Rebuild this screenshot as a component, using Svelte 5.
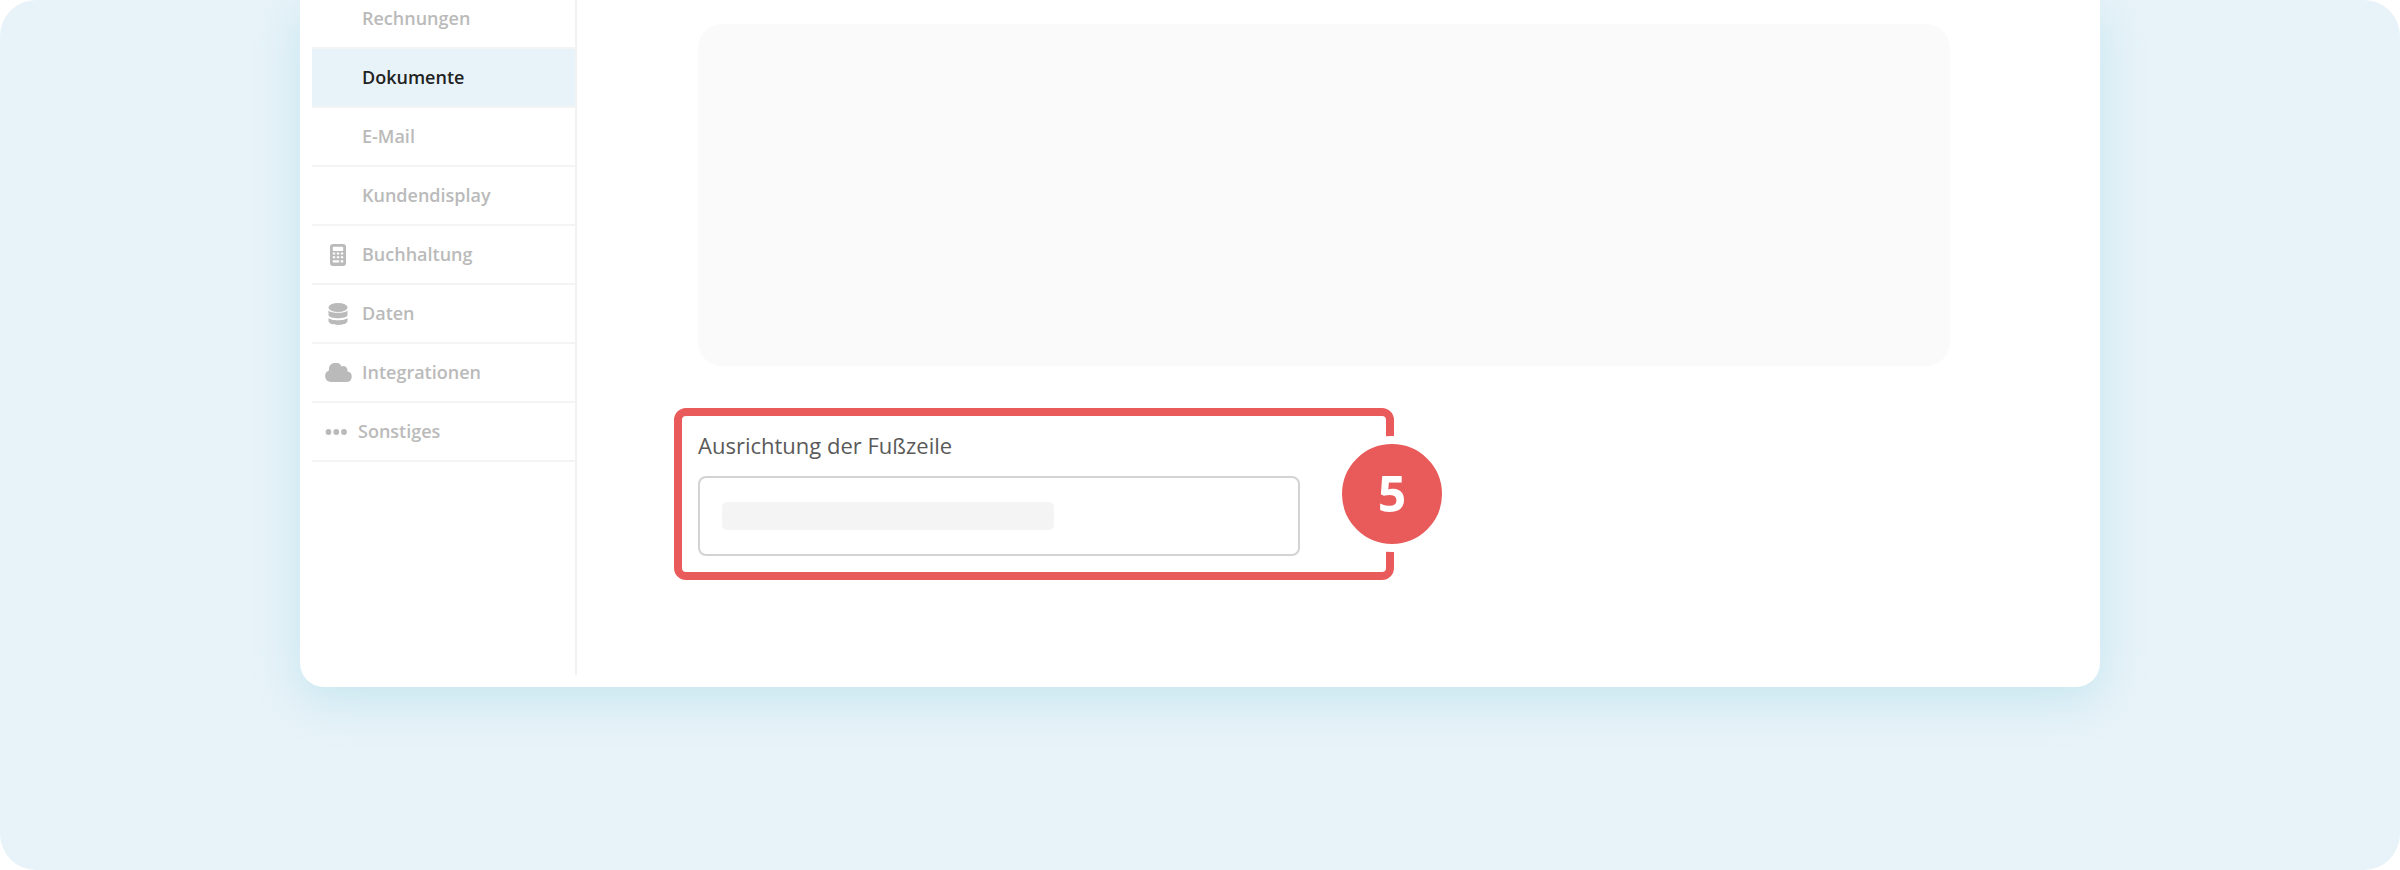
<script>
	let open = $state(false);

	const items = [
		{ label: 'Rechnungen' },
		{ label: 'Dokumente', active: true },
		{ label: 'E-Mail' },
		{ label: 'Kundendisplay' },
		{ label: 'Buchhaltung', icon: 'calculator' },
		{ label: 'Daten', icon: 'database' },
		{ label: 'Integrationen', icon: 'cloud' },
		{ label: 'Sonstiges', icon: 'dots' }
	];
</script>

<div class="page">
	<div class="card">
		<nav class="sidebar">
			<ul>
				{#each items as item}
					<li>
						<a href="#{item.label}" class:active={item.active} class:compact={item.icon === 'dots'}>
							<span class="icon">
								{#if item.icon === 'calculator'}
									<svg width="16" height="22" viewBox="0 0 16 22">
										<path
											fill-rule="evenodd"
											d="M3 0h10a3 3 0 0 1 3 3v16a3 3 0 0 1-3 3H3a3 3 0 0 1-3-3V3a3 3 0 0 1 3-3ZM3.500 2.700a.7.7 0 0 0-.7.7v2.900a.7.7 0 0 0 .7.7h9a.7.7 0 0 0 .7-.7V3.400a.7.7 0 0 0-.7-.7ZM2.800 8.500v2h2.400v-2ZM6.800 8.500v2h2.400v-2ZM10.800 8.500v2h2.400v-2ZM2.800 12.200v2h2.400v-2ZM6.800 12.200v2h2.400v-2ZM10.800 12.200v2h2.400v-2ZM2.800 16.200v2.200h6.400v-2.200ZM10.800 16.200v2.200h2.400v-2.200Z"
										/>
									</svg>
								{:else if item.icon === 'database'}
									<svg width="20" height="22" viewBox="0 0 20 22">
										<ellipse cx="10" cy="4.500" rx="9.500" ry="4.500" />
										<path d="M.5 7.500C3 10.600 17 10.600 19.500 7.500V12C19 16.400 1 16.400.5 12Z" />
										<path d="M.5 15C3 18 17 18 19.500 15v3C19 23.200 1 23.200.5 18Z" />
									</svg>
								{:else if item.icon === 'cloud'}
									<svg width="27" height="19" viewBox="0 0 27 19">
										<path
											d="M6 19a6 6 0 0 1-2-11.600A6.700 6.700 0 0 1 16.600 3.400 4.100 4.100 0 0 1 22.300 8.200 5.450 5.450 0 0 1 21.500 19Z"
										/>
									</svg>
								{:else if item.icon === 'dots'}
									<svg width="24" height="6" viewBox="0 0 24 6">
										<circle cx="4.500" cy="3" r="2.900" />
										<circle cx="12.300" cy="3" r="2.900" />
										<circle cx="20" cy="3" r="2.900" />
									</svg>
								{/if}
							</span>
							<span class="text">{item.label}</span>
						</a>
					</li>
				{/each}
			</ul>
		</nav>

		<main>
			<div class="preview"></div>

			<div class="highlight">
				<label for="footer-align">Ausrichtung der Fußzeile</label>
				<button
					id="footer-align"
					type="button"
					class="select"
					aria-haspopup="listbox"
					aria-expanded={open}
					onclick={() => (open = !open)}
				>
					<span class="skeleton"></span>
				</button>
				<span class="badge">5</span>
			</div>
		</main>
	</div>
</div>

<style>
	:global(body) {
		margin: 0;
		background: #fff;
		font-family: 'Open Sans', sans-serif;
	}

	.page {
		box-sizing: border-box;
		min-height: 100vh;
		padding-bottom: 64px;
		border-radius: 36px;
		background: #e8f3f9;
		overflow: hidden;
	}

	.card {
		box-sizing: border-box;
		display: flex;
		width: 75%;
		margin: 0 auto;
		padding: 0 12px 12px;
		border-radius: 0 0 24px 24px;
		background: #fff;
		box-shadow: 0 12px 48px rgba(153, 212, 226, 0.45);
		overflow: hidden;
	}

	.sidebar {
		flex: none;
		width: 263px;
		border-right: 2px solid #f2f2f2;
	}

	/* the list is scrolled a little past its first entry */
	ul {
		margin: -10px 0 0;
		padding: 0;
		list-style: none;
	}

	li {
		border-bottom: 2px solid #f4f4f4;
	}

	a {
		display: flex;
		align-items: center;
		gap: 10px;
		height: 57px;
		padding-left: 12px;
		color: #bababa;
		font-size: 18px;
		font-weight: 600;
		line-height: 24px;
		text-decoration: none;
	}

	a.active {
		background: #e8f3f9;
		color: #222;
	}

	a.compact {
		gap: 6px;
	}

	.icon {
		display: flex;
		justify-content: center;
		width: 28px;
	}

	.compact .icon {
		justify-content: flex-start;
	}

	.text {
		padding-bottom: 2px;
	}

	svg {
		display: block;
		fill: #bababa;
	}

	main {
		flex: 1;
		padding: 24px 138px 95px 121px;
	}

	.preview {
		height: 342px;
		border-radius: 24px;
		background: #fafafa;
	}

	.highlight {
		position: relative;
		box-sizing: border-box;
		width: 720px;
		max-width: 100%;
		margin-top: 42px;
		margin-left: -24px;
		padding: 14px 86px 16px 16px;
		border: 8px solid #e95a5a;
		border-radius: 12px;
	}

	label {
		display: block;
		margin-bottom: 16px;
		color: #5a5a5a;
		font-size: 22px;
		line-height: 30px;
	}

	.select {
		box-sizing: border-box;
		display: flex;
		align-items: center;
		width: 100%;
		height: 80px;
		padding: 0 22px;
		border: 2px solid #d3d3d3;
		border-radius: 8px;
		background: #fff;
		cursor: pointer;
	}

	.skeleton {
		width: 332px;
		height: 28px;
		border-radius: 5px;
		background: #f4f4f4;
	}

	.badge {
		position: absolute;
		top: 50%;
		right: -64px;
		box-sizing: border-box;
		width: 116px;
		height: 116px;
		border: 8px solid #fff;
		border-radius: 50%;
		background: #e95a5a;
		color: #fff;
		font-size: 50px;
		font-weight: 700;
		line-height: 98px;
		text-align: center;
		transform: translateY(-50%);
	}
</style>
